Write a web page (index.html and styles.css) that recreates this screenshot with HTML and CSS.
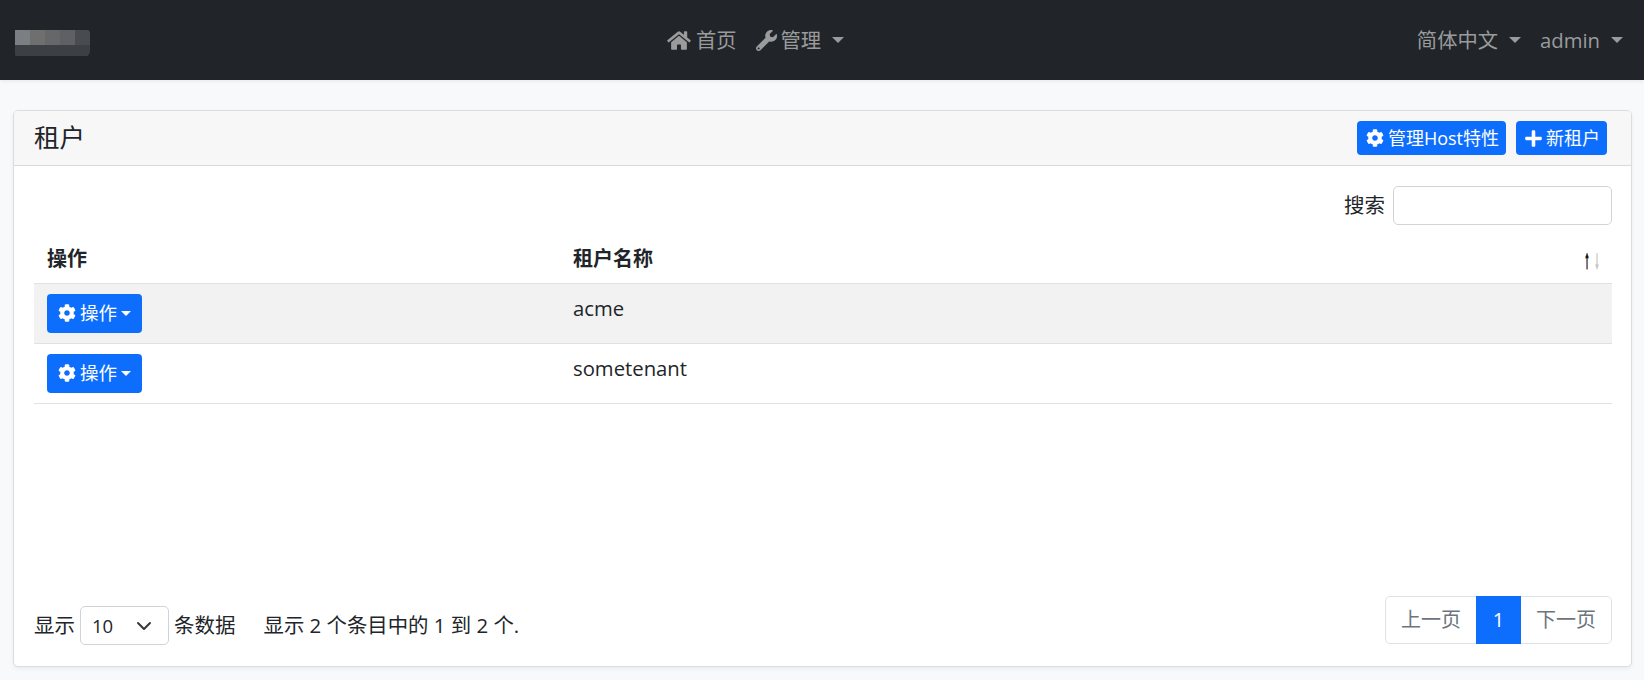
FILE: index.html
```html
<!DOCTYPE html>
<html lang="zh-CN">
<head>
<meta charset="utf-8">
<title>租户</title>
<link rel="stylesheet" href="styles.css">
</head>
<body>
<svg class="sprite" width="0" height="0" aria-hidden="true">
  <symbol id="i-cog" viewBox="0 0 512 512"><path fill="currentColor" d="M487.4 315.7l-42.6-24.6c4.3-23.2 4.3-47 0-70.2l42.6-24.6c4.9-2.8 7.1-8.6 5.5-14-11.1-35.6-30-67.8-54.7-94.6-3.8-4.1-10-5.1-14.8-2.3L380.8 110c-17.9-15.4-38.5-27.3-60.8-35.1V25.8c0-5.6-3.9-10.5-9.4-11.7-36.7-8.2-74.3-7.8-109.2 0-5.5 1.2-9.4 6.1-9.4 11.7V75c-22.2 7.9-42.8 19.8-60.8 35.1L88.7 85.5c-4.9-2.8-11-1.9-14.8 2.3-24.7 26.7-43.6 58.9-54.7 94.6-1.7 5.4.6 11.2 5.5 14L67.3 221c-4.3 23.2-4.3 47 0 70.2l-42.6 24.6c-4.9 2.8-7.1 8.6-5.5 14 11.1 35.6 30 67.8 54.7 94.6 3.8 4.1 10 5.1 14.8 2.3l42.6-24.6c17.9 15.4 38.5 27.3 60.8 35.1v49.2c0 5.6 3.9 10.5 9.4 11.7 36.7 8.2 74.3 7.8 109.2 0 5.5-1.2 9.4-6.1 9.4-11.7v-49.2c22.2-7.9 42.8-19.8 60.8-35.1l42.6 24.6c4.9 2.8 11 1.9 14.8-2.3 24.7-26.7 43.6-58.9 54.7-94.6 1.5-5.5-.7-11.3-5.6-14.1zM256 336c-44.1 0-80-35.9-80-80s35.9-80 80-80 80 35.9 80 80-35.9 80-80 80z"/></symbol>
  <symbol id="i-home" viewBox="0 0 576 512"><path fill="currentColor" d="M280.37 148.26L96 300.11V464a16 16 0 0 0 16 16l112.06-.29a16 16 0 0 0 15.92-16V368a16 16 0 0 1 16-16h64a16 16 0 0 1 16 16v95.64a16 16 0 0 0 16 16.05L464 480a16 16 0 0 0 16-16V300L295.67 148.26a12.19 12.19 0 0 0-15.3 0zM571.6 251.47L488 182.56V44.05a12 12 0 0 0-12-12h-56a12 12 0 0 0-12 12v72.61L318.47 43a48 48 0 0 0-61 0L4.34 251.47a12 12 0 0 0-1.6 16.9l25.5 31A12 12 0 0 0 45.15 301l235.22-193.74a12.19 12.19 0 0 1 15.3 0L530.9 301a12 12 0 0 0 16.9-1.6l25.5-31a12 12 0 0 0-1.7-16.93z"/></symbol>
  <symbol id="i-wrench" viewBox="0 0 512 512"><path fill="currentColor" d="M507.73 109.1c-2.24-9.03-13.54-12.09-20.12-5.51l-74.36 74.36-67.88-11.31-11.31-67.88 74.36-74.36c6.62-6.62 3.43-17.9-5.66-20.16-47.38-11.74-99.55.91-136.58 37.93-39.64 39.64-50.55 97.1-34.05 147.2L18.74 402.76c-24.99 24.99-24.99 65.51 0 90.5 24.99 24.99 65.51 24.99 90.5 0l213.21-213.21c50.12 16.71 107.47 5.68 147.37-34.22 37.07-37.07 49.7-89.32 37.91-136.73zM64 472c-13.25 0-24-10.75-24-24 0-13.26 10.75-24 24-24s24 10.74 24 24c0 13.25-10.75 24-24 24z"/></symbol>
  <symbol id="i-plus" viewBox="0 0 448 512"><path fill="currentColor" d="M416 208H272V64c0-17.67-14.33-32-32-32h-32c-17.67 0-32 14.33-32 32v144H32c-17.67 0-32 14.33-32 32v32c0 17.67 14.33 32 32 32h144v144c0 17.67 14.33 32 32 32h32c17.67 0 32-14.33 32-32V304h144c17.67 0 32-14.33 32-32v-32c0-17.67-14.33-32-32-32z"/></symbol>
</svg>

<nav class="navbar">
  <div class="logo" aria-hidden="true">
    <div class="logo-top"><i class="p1"></i><i class="p2"></i><i class="p3"></i><i class="p4"></i><i class="p5"></i></div>
    <div class="logo-bottom"></div>
  </div>
  <div class="nav-center">
    <a class="nav-link"><svg class="ico ico-home"><use href="#i-home"/></svg>首页</a>
    <a class="nav-link"><svg class="ico ico-wrench"><use href="#i-wrench"/></svg>管理<span class="caret nav-caret"></span></a>
  </div>
  <div class="nav-right">
    <a class="nav-link">简体中文<span class="caret nav-caret"></span></a>
    <a class="nav-link">admin<span class="caret nav-caret"></span></a>
  </div>
</nav>

<main class="page">
  <section class="card">
    <header class="card-header">
      <h1 class="card-title">租户</h1>
      <div class="actions">
        <button class="btn btn-head"><svg class="ico ico-btn"><use href="#i-cog"/></svg>管理Host特性</button>
        <button class="btn btn-head"><svg class="ico ico-plus"><use href="#i-plus"/></svg>新租户</button>
      </div>
    </header>
    <div class="card-body">
      <div class="search-row">
        <label class="search-label">搜索</label>
        <input class="search-input" type="text">
      </div>
      <table class="table">
        <thead>
          <tr>
            <th class="col-actions">操作</th>
            <th class="col-name"><div class="th-sort">租户名称<span class="sort"><b>↑</b><b class="off">↓</b></span></div></th>
          </tr>
        </thead>
        <tbody>
          <tr class="odd">
            <td><button class="btn btn-row"><svg class="ico ico-row"><use href="#i-cog"/></svg>操作<span class="caret row-caret"></span></button></td>
            <td class="name">acme</td>
          </tr>
          <tr>
            <td><button class="btn btn-row"><svg class="ico ico-row"><use href="#i-cog"/></svg>操作<span class="caret row-caret"></span></button></td>
            <td class="name">sometenant</td>
          </tr>
        </tbody>
      </table>
      <footer class="table-footer">
        <div class="length">
          <span>显示</span>
          <span class="select"><span>10</span><svg class="chev" viewBox="0 0 16 16"><path fill="none" stroke="#343a40" stroke-linecap="round" stroke-linejoin="round" stroke-width="2" d="M2 5l6 6 6-6"/></svg></span>
          <span>条数据</span>
          <span class="info">显示 2 个条目中的 1 到 2 个.</span>
        </div>
        <div class="pagination">
          <a class="page-item prev">上一页</a>
          <a class="page-item active">1</a>
          <a class="page-item next">下一页</a>
        </div>
      </footer>
    </div>
  </section>
</main>
</body>
</html>
```

FILE: styles.css
```css
* { box-sizing: border-box; }
html, body { margin: 0; padding: 0; }
body {
  width: 1644px;
  height: 680px;
  overflow: hidden;
  background: #f8f9fa;
  color: #212529;
  font-family: "Open Sans", "Noto Sans CJK SC", sans-serif;
  font-size: 20px;
  line-height: 1.5;
}
.sprite { display: block; width: 0; height: 0; }
.ico { display: inline-block; flex: none; }

.navbar {
  height: 80px;
  background: #212529;
  display: flex;
  align-items: center;
  padding: 0 21px 0 15px;
  box-shadow: 0 1px 4px rgba(0, 0, 0, .08);
}
.logo { width: 75px; height: 27px; margin-top: 7px; overflow: hidden; border-radius: 0 3px 6px 3px; }
.logo-top { display: flex; height: 15px; }
.logo-top i { flex: 1; }
.p1 { background: #7b7e83; }
.p2 { background: #6f6f6f; }
.p3 { background: #666768; }
.p4 { background: #5e6064; }
.p5 { background: #484b4f; }
.logo-bottom { height: 11px; background: #3c3f43; }
.nav-center, .nav-right { display: flex; align-items: center; }
.nav-center { gap: 19px; margin-left: 577px; }
.nav-right { margin-left: auto; gap: 19px; }
.nav-link {
  display: flex;
  align-items: center;
  color: #9a9b9c;
  font-size: 20.3px;
  line-height: 30px;
  white-space: nowrap;
}
.ico-home { width: 24px; height: 21px; margin-right: 5px; }
.ico-wrench { width: 21px; height: 21px; margin-right: 4px; }
.caret {
  display: inline-block;
  width: 0;
  height: 0;
  border-top: 6px solid currentColor;
  border-left: 6px solid transparent;
  border-right: 6px solid transparent;
}
.nav-caret { margin-left: 11px; }

.page { padding: 30px 12px 13px 13px; }
.card {
  height: 557px;
  background: #fff;
  border: 1px solid #dcdde0;
  border-radius: 5px;
  box-shadow: 0 2px 4px rgba(0, 0, 0, .06);
  display: flex;
  flex-direction: column;
  overflow: hidden;
}
.card-header {
  height: 55px;
  flex: none;
  background: #f7f7f7;
  border-bottom: 1px solid #d9d9d9;
  display: flex;
  align-items: center;
  justify-content: space-between;
  padding: 0 24px 0 20px;
}
.card-title { margin: 0 0 3px; font-size: 25.5px; font-weight: 400; line-height: 36px; }
.actions { display: flex; gap: 10px; }
.btn {
  display: inline-flex;
  align-items: center;
  height: 34px;
  padding: 0 9px;
  border: 0;
  border-radius: 4px;
  background: #0d6efd;
  color: #fff;
  font: inherit;
  font-size: 18px;
  white-space: nowrap;
}
.btn-head { padding-right: 7px; }
.ico-btn { width: 18px; height: 18px; margin-right: 4px; }
.ico-plus { width: 17px; height: 19px; margin-right: 4px; }
.btn-row { height: 39px; padding: 0 11px; border-radius: 4px; font-size: 18.5px; }
.ico-row { width: 18px; height: 18px; margin-right: 4px; }
.row-caret { margin-left: 4px; border-top-width: 5px; border-left-width: 5px; border-right-width: 5px; }

.card-body { flex: 1; display: flex; flex-direction: column; padding: 20px 19px 21px 20px; }
.search-row { display: flex; justify-content: flex-end; align-items: center; gap: 8px; height: 39px; }
.search-label { font-size: 20.5px; }
.search-input {
  width: 219px;
  height: 39px;
  border: 1px solid #ced4da;
  border-radius: 5px;
  background: #fff;
}

.table { width: 100%; margin-top: 9px; border-collapse: collapse; table-layout: fixed; }
.table th {
  height: 49px;
  padding: 1px 13px 0;
  text-align: left;
  font-weight: 700;
  font-size: 20px;
  border-bottom: 1px solid #dee2e6;
}
.col-actions { width: 526px; }
.th-sort { display: flex; justify-content: space-between; align-items: center; }
.sort { display: flex; font-weight: 400; font-size: 26px; line-height: 1; margin-right: -2.5px; color: #111; }
.sort b {
  font-weight: 400;
  font-family: "Liberation Sans", sans-serif;
  width: 10px;
  display: flex;
  justify-content: center;
  transform: scaleX(.38);
  -webkit-text-stroke: 1.3px currentColor;
}
.sort .off { color: #c8c8c8; }
.table td {
  height: 60px;
  padding: 10px 13px 10px;
  vertical-align: top;
  border-bottom: 1px solid #dee2e6;
}
.odd td { background: #f2f2f2; }
.table .name { padding-top: 9px; font-size: 20.3px; }

.table-footer { margin-top: auto; display: flex; justify-content: space-between; align-items: flex-start; }
.length { display: flex; align-items: center; height: 39px; margin-top: 10px; font-size: 20.5px; gap: 5px; }
.select {
  width: 89px;
  height: 39px;
  display: flex;
  align-items: center;
  justify-content: space-between;
  padding: 0 16px 0 11px;
  border: 1px solid #ced4da;
  border-radius: 5px;
  background: #fff;
  font-size: 18.5px;
}
.chev { width: 16px; height: 16px; }
.info { margin-left: 23px; font-size: 20.4px; }
.pagination {
  display: flex;
  height: 48px;
  border: 1px solid #dee2e6;
  border-radius: 5px;
  font-size: 20px;
}
.page-item { display: flex; align-items: center; justify-content: center; color: #6c757d; height: 46px; }
.prev { width: 90px; }
.active { width: 45px; margin-top: -1px; height: 48px; background: #0d6efd; color: #fff; }
.next { width: 90px; }
```
